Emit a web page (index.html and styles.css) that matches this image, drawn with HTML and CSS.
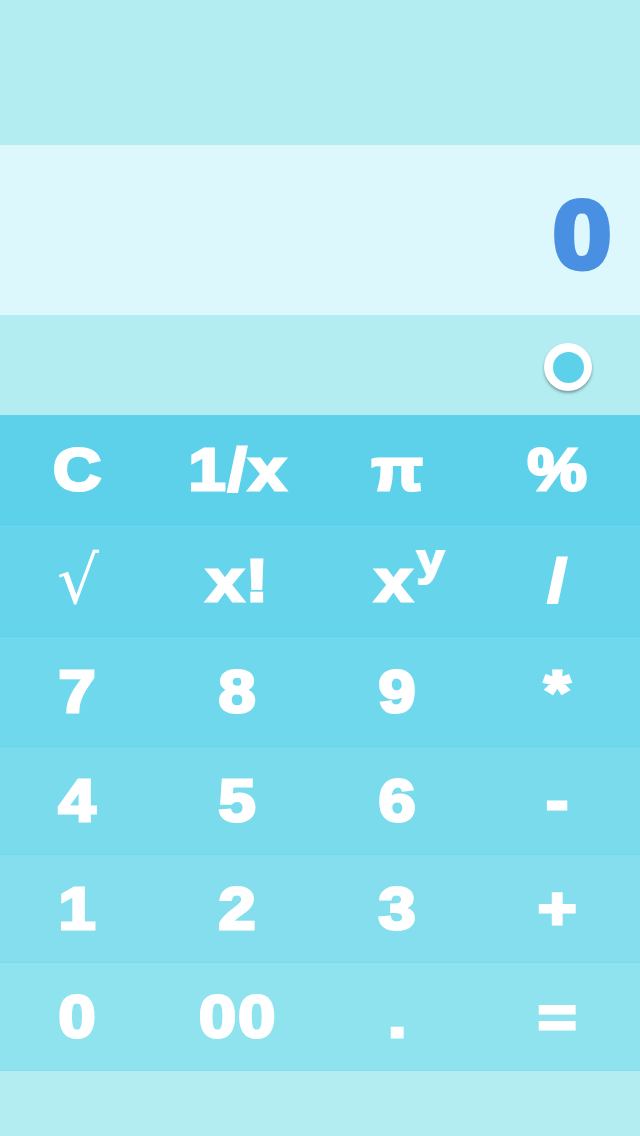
FILE: index.html
```html
<!DOCTYPE html>
<html>
<head>
<meta charset="utf-8">
<link rel="stylesheet" href="styles.css">
</head>
<body>
<div class="app">
  <div class="topbar"></div>
  <div class="display"><span class="value">0</span></div>
  <div class="toggle-row"><div class="toggle"><div class="toggle-dot"></div></div></div>
  <div class="keypad">
    <div class="row r1"><div class="key">C</div><div class="key">1/x</div><div class="key">π</div><div class="key">%</div></div>
    <div class="row r2"><div class="key thin">√</div><div class="key">x!</div><div class="key"><span class="pow">x<sup>y</sup></span></div><div class="key">/</div></div>
    <div class="row r3"><div class="key">7</div><div class="key">8</div><div class="key">9</div><div class="key">*</div></div>
    <div class="row r4"><div class="key">4</div><div class="key">5</div><div class="key">6</div><div class="key">-</div></div>
    <div class="row r5"><div class="key">1</div><div class="key">2</div><div class="key">3</div><div class="key">+</div></div>
    <div class="row r6"><div class="key">0</div><div class="key">00</div><div class="key">.</div><div class="key">=</div></div>
  </div>
  <div class="bottombar"></div>
</div>
</body>
</html>
```

FILE: styles.css
```css
html, body {
  margin: 0;
  padding: 0;
}
body {
  width: 640px;
  height: 1136px;
  overflow: hidden;
  font-family: "Liberation Sans", Arial, sans-serif;
}
.app {
  display: flex;
  flex-direction: column;
  height: 1136px;
  background: #b3edf1;
}
.topbar {
  height: 145px;
  background: #b3edf1;
}
.display {
  height: 170px;
  background: #dcf8fc;
  display: flex;
  align-items: center;
  justify-content: flex-end;
  padding-right: 29px;
}
.value {
  color: #4a90e2;
  font-weight: bold;
  font-size: 96px;
  line-height: 1;
  margin-top: 10px;
  -webkit-text-stroke: 5px #4a90e2;
  display: inline-block;
  transform: scaleX(1.1);
  transform-origin: right center;
}
.toggle-row {
  height: 100px;
  background: #b3edf1;
  display: flex;
  align-items: center;
  justify-content: flex-end;
  padding-right: 48px;
}
.toggle {
  width: 48px;
  height: 48px;
  border-radius: 50%;
  background: #fff;
  box-shadow: 0 2px 3px rgba(0,0,0,0.35);
  display: flex;
  align-items: center;
  justify-content: center;
  margin-top: 4px;
}
.toggle-dot {
  width: 31px;
  height: 31px;
  border-radius: 50%;
  background: #5dd1ea;
}
.keypad {
  height: 656px;
  display: grid;
  grid-template-rows: 110px 112px 110px 108px 108px 108px;
}
.row {
  display: grid;
  grid-template-columns: repeat(4, 160px);
  box-shadow: inset 0 -1px 0 rgba(0,150,190,0.06);
}
.r1 { background: #5dd1ea; }
.r2 { background: #66d4eb; }
.r3 { background: #70d8ec; }
.r4 { background: #7adbec; }
.r5 { background: #84deed; }
.r6 { background: #8ee3ef; }
.key {
  display: flex;
  align-items: center;
  justify-content: center;
  color: #fff;
  font-weight: bold;
  font-size: 59px;
  line-height: 1;
  padding-right: 3px;
  -webkit-text-stroke: 3px #fff;
  letter-spacing: 2px;
  transform: scaleX(1.13);
}
.key.thin {
  font-weight: normal;
  font-family: "DejaVu Sans", sans-serif;
  font-size: 66px;
  -webkit-text-stroke: 0;
  letter-spacing: 0;
  padding-right: 4px;
  transform: none;
}
.pow {
  display: inline-block;
  line-height: 1;
  padding-left: 22px;
}
.pow sup {
  font-size: 44px;
  vertical-align: 26px;
  line-height: 0;
  margin-left: 2px;
  -webkit-text-stroke: 2px #fff;
}
.bottombar {
  flex: 1;
  background: #b3edf1;
}
```
